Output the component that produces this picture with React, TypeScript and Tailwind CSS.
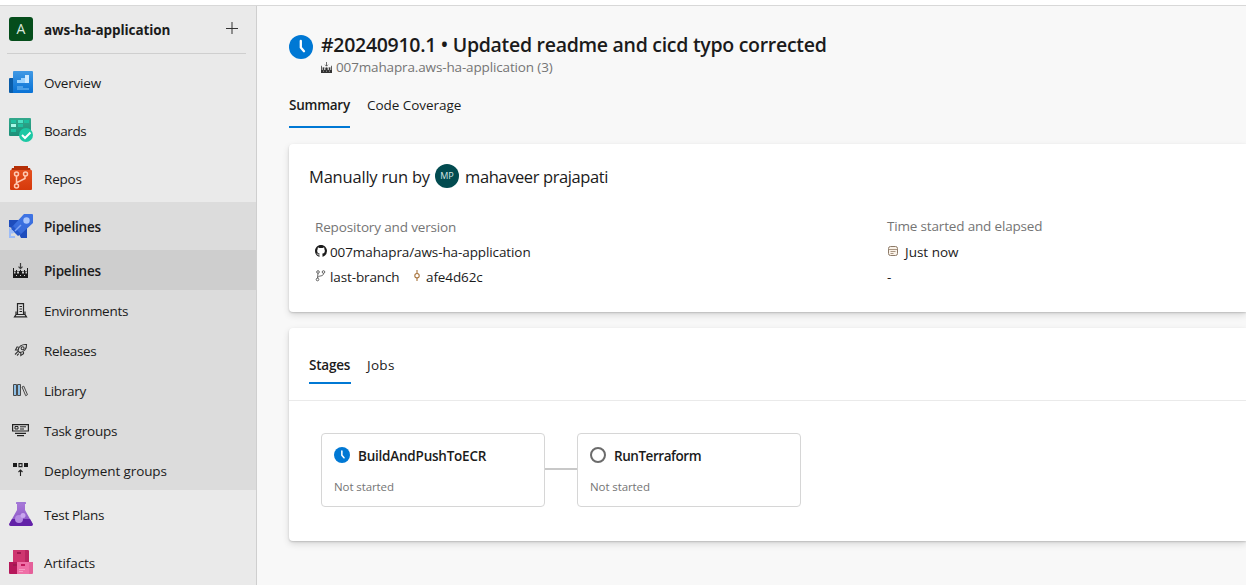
import type { ReactNode } from "react";

const svg = "block shrink-0";

function OverviewIcon() {
  return (
    <svg className={svg} width="24" height="24" viewBox="0 0 24 24">
      <defs>
        <linearGradient id="ov" x1="0" y1="0" x2="0" y2="1">
          <stop offset="0" stopColor="#4199e4" />
          <stop offset="1" stopColor="#0872d6" />
        </linearGradient>
      </defs>
      <path d="M1 8h4v15H1a1 1 0 0 1-1-1V9a1 1 0 0 1 1-1z" fill="#0a5ca8" />
      <path d="M5 1h18a1 1 0 0 1 1 1v20a1 1 0 0 1-1 1H3.500c.5 0 .5-.5.500-1V2a1 1 0 0 1 1-1z" fill="url(#ov)" />
      <path d="M8 10h4V8h4V5h4v8H8z" fill="#9ed4ff" />
      <path d="M16 5h4v8h-4z" fill="#cfeaff" />
      <path d="M8 16h6v2h6v2H8z" fill="#4a9fe8" />
    </svg>
  );
}

function BoardsIcon() {
  return (
    <svg className={svg} width="24" height="24" viewBox="0 0 24 24">
      <defs>
        <linearGradient id="bd" x1="0" y1="0" x2="0" y2="1">
          <stop offset="0" stopColor="#33a88c" />
          <stop offset="1" stopColor="#1b8f78" />
        </linearGradient>
      </defs>
      <rect width="22" height="18" rx="1" fill="url(#bd)" />
      <g fill="#1fc0a0">
        <path d="M2 2h5v3H2zM15 2h5v3h-5zM9 6h5v3H9zM2 11h5v3H2z" />
      </g>
      <path d="M9 2h5v3H9z" fill="#50e2c6" />
      <path d="M2 6h5v3H2z" fill="#a8f8e8" />
      <circle cx="17" cy="17" r="7" fill="#1cc8a4" />
      <path d="m13 17 3 3 5.500-5.500" fill="none" stroke="#fff" strokeWidth="2" />
    </svg>
  );
}

function ReposIcon() {
  return (
    <svg className={svg} width="24" height="24" viewBox="0 0 24 24">
      <defs>
        <linearGradient id="rp" x1="0" y1="0" x2="0" y2="1">
          <stop offset="0" stopColor="#e4501f" />
          <stop offset="1" stopColor="#d6390b" />
        </linearGradient>
      </defs>
      <path d="M5 0h14v2h2l1 3H2l1-3h2z" fill="#b52f07" />
      <rect x="1" y="4" width="22" height="20" rx="1" fill="url(#rp)" />
      <g fill="none" stroke="#ffc9b3" strokeWidth="1.500">
        <circle cx="7.500" cy="8" r="2" />
        <circle cx="16.500" cy="8" r="2" />
        <circle cx="7.500" cy="20" r="2" />
        <path d="M7.500 10v8M8 16.500l8-4V10" />
      </g>
    </svg>
  );
}

function RocketIcon() {
  return (
    <svg className={svg} width="24" height="24" viewBox="0 0 24 24">
      <defs>
        <linearGradient id="pl" x1="0" y1="0" x2="0" y2="1">
          <stop offset="0" stopColor="#3f74e4" />
          <stop offset="1" stopColor="#3468d8" />
        </linearGradient>
      </defs>
      <path d="M0 6h10l-4 9-6-2zM18 13v11h-6l-3-6z" fill="#1d4cbc" />
      <path d="M15 0h8a1 1 0 0 1 1 1v8L11 21l-8-8z" fill="url(#pl)" />
      <path d="m4 12-2 3 7 7 3-2z" fill="#2356cb" />
      <circle cx="17.500" cy="6.500" r="3.200" fill="#a9c5fb" />
      <path d="m5.500 16.500 6-6 1 1-6 6z" fill="#7ea4f5" />
      <path d="M0 13.500 5.500 18 4 19.500H2V22h4v2H0z" fill="#9dbcf7" />
    </svg>
  );
}

function BuildIcon({ size = 15, color = "#1b1b1b" }: { size?: number; color?: string }) {
  return (
    <svg className={svg} width={size} height={size} viewBox="0 0 15 15">
      <path d="M7.500 0v5.500M5.500 3.700l2 2 2-2" fill="none" stroke={color} strokeOpacity=".8" strokeWidth="1.200" />
      <path
        fillRule="evenodd"
        d="M0 5h1v3h2V7h1v1h3V7h1v1h3V7h1v1h2V5h1v10H0zM1 8.500v2h1.500v-2zM4 8.500v2h2v-2zM9 8.500v2h2v-2zM12.500 8.500v2H14v-2zM3 12v1h1v-1zm4 0v1h1v-1zm4 0v1h1v-1z"
        fill={color}
      />
    </svg>
  );
}

function EnvironmentsIcon() {
  return (
    <svg className={svg} width="15" height="15" viewBox="0 0 15 15" fill="none" stroke="#262626">
      <path d="M4.500 11.500V.7h6v10.800M6.500 3.500h2.500M6.500 6h2.500M6.500 8.500h2.500M3 8.500v3L1.500 13.800h12l-1.500-2.300v-3M3 11.500h9" strokeWidth="1.200" />
    </svg>
  );
}

function ReleasesIcon() {
  return (
    <svg className={svg} width="15" height="15" viewBox="0 0 15 15" fill="none" stroke="#333" strokeWidth="1.100">
      <path d="M5 8c0-4.500 4-7 8.500-6.500.4 4-2.500 8-7 8zM5.500 4H4L2.500 7h2.500M10.500 9v1.700L7.800 12.500v-3M2 11.500l2.800-2.800M4 12.500l1.800-1.800" />
      <circle cx="9.600" cy="5.300" r="1.500" />
    </svg>
  );
}

function LibraryIcon() {
  return (
    <svg className={svg} width="15" height="15" viewBox="0 0 15 15" fill="none" stroke="#4a4a4a">
      <path d="M.5 1.500h3v11h-3zM4.500 1.500h3v11h-3z" fill="#8dbfe6" />
      <path d="m9 4 1.800-.8 3.700 8.500-1.800 1z" fill="#dadada" />
    </svg>
  );
}

function TaskGroupsIcon() {
  return (
    <svg className={svg} width="17" height="15" viewBox="0 0 17 15" fill="none" stroke="#222" strokeWidth="1.200">
      <path d="M.6 1.600h15.800v6.400H.6zM3 10.300h11M5 12.600h7" />
      <path d="M3 3.500h3v2.500H3zM8 3.800h6M8 6h4" strokeWidth="1" />
    </svg>
  );
}

function DeploymentIcon() {
  return (
    <svg className={svg} width="15" height="15" viewBox="0 0 15 15">
      <path d="M0 0h4v4H0zM11 0h4v4h-4z" fill="#1b1b1b" />
      <path d="M6 .6h3v3H6zM7.500 13V7M5.500 9l2-2 2 2" fill="none" stroke="#222" strokeWidth="1.100" />
    </svg>
  );
}

function TestPlansIcon() {
  return (
    <svg className={svg} width="24" height="24" viewBox="0 0 24 24">
      <defs>
        <linearGradient id="tp" x1="0" y1="0" x2="0" y2="1">
          <stop offset="0" stopColor="#a877d8" />
          <stop offset="1" stopColor="#8350c2" />
        </linearGradient>
      </defs>
      <path d="M8 2h8v6l7.500 13.500C24.300 23 23.500 24 22 24H2c-1.500 0-2.300-1-1.500-2.500L8 8z" fill="url(#tp)" />
      <path d="M3 17h18l2.500 4.500c.8 1.500 0 2.500-1.500 2.500H2c-1.500 0-2.300-1-1.500-2.500z" fill="#6322a8" />
      <rect x="7" y="0" width="10" height="2" rx=".5" fill="#a177d6" />
      <circle cx="10" cy="17" r="4" fill="#b48ae2" />
      <circle cx="14" cy="13.500" r="2.500" fill="#c9a6ee" />
    </svg>
  );
}

function ArtifactsIcon() {
  return (
    <svg className={svg} width="24" height="24" viewBox="0 0 24 24">
      <path d="M4 0h12v12H4z" fill="#cf356f" />
      <path d="M16 0h3a1 1 0 0 1 1 1v11h-4z" fill="#bb2561" />
      <path d="M0 12h8v12H1a1 1 0 0 1-1-1z" fill="#b5175a" />
      <path d="M8 12h12v12H8z" fill="#ef6fa6" />
      <path d="M20 12h4v11a1 1 0 0 1-1 1h-3z" fill="#e5609a" />
      <path d="M8 2h4v2H8zM4 14h4v2H4z" fill="#a01850" />
      <path d="M12 14h4v2h-4z" fill="#c2185b" />
      <path d="M10 19.500h6M10 21.500h4" stroke="#f79ac2" />
    </svg>
  );
}

function ClockIcon({ size }: { size: number }) {
  return (
    <svg className={svg} width={size} height={size} viewBox="0 0 24 24">
      <circle cx="12" cy="12" r="12" fill="#0078d4" />
      <path d="M11.800 6v6.500l3.200 3.700" fill="none" stroke="#fff" strokeWidth="2.300" strokeLinecap="round" strokeLinejoin="round" />
    </svg>
  );
}

function GithubIcon() {
  return (
    <svg className="mb-[3px] block shrink-0" width="12" height="12" viewBox="0 0 16 16" fill="#1b1b1b">
      <path d="M8 0C3.580 0 0 3.580 0 8c0 3.540 2.290 6.530 5.470 7.590.4.070.55-.17.55-.38 0-.19-.01-.82-.01-1.490-2.010.37-2.530-.49-2.690-.94-.09-.23-.48-.94-.82-1.130-.28-.15-.68-.52-.01-.53.63-.01 1.080.58 1.230.82.72 1.210 1.870.87 2.330.66.070-.52.28-.87.51-1.070-1.780-.2-3.640-.89-3.640-3.950 0-.87.31-1.590.82-2.150-.08-.2-.36-1.020.08-2.120 0 0 .67-.21 2.200.82.64-.18 1.320-.27 2-.27s1.360.09 2 .27c1.530-1.040 2.200-.82 2.200-.82.44 1.100.16 1.920.08 2.120.51.56.82 1.270.82 2.150 0 3.070-1.870 3.750-3.650 3.950.29.25.54.73.54 1.480 0 1.070-.01 1.930-.01 2.200 0 .21.15.46.55.38A8.010 8.010 0 0 0 16 8c0-4.420-3.580-8-8-8z" />
    </svg>
  );
}

function BranchIcon() {
  return (
    <svg className="mb-[3px] block shrink-0" width="11" height="12" viewBox="0 0 11 12" fill="none" stroke="#555" strokeWidth=".9">
      <circle cx="3" cy="2" r="1.300" />
      <circle cx="8.500" cy="2" r="1.300" />
      <circle cx="2.500" cy="9.500" r="1.300" />
      <path d="M3 3.300 2.500 8.200M8.500 3.300C8.500 7 4 5 2.800 7.500" />
    </svg>
  );
}

function CommitIcon() {
  return (
    <svg className="mb-[3px] block shrink-0" width="8" height="12" viewBox="0 0 8 12" fill="none" stroke="#a8743c" strokeWidth="1.100">
      <path d="M4 0v3.500M4 8v3" />
      <circle cx="4" cy="5.700" r="2.200" />
    </svg>
  );
}

function CalendarIcon() {
  return (
    <svg className="mb-[3px] block shrink-0" width="10" height="10" viewBox="0 0 10 10" fill="none">
      <rect x=".5" y=".5" width="9" height="9" rx="2" stroke="#8c7a68" fill="#faf2e8" />
      <path d="M.5 3.500h9M2.500 5.500h5M2.500 7.500h3" stroke="#a08c78" strokeWidth=".9" />
    </svg>
  );
}

function NavItem({ icon, label, tracking, active }: { icon: ReactNode; label: string; tracking: string; active?: boolean }) {
  return (
    <div className={`flex h-12 items-center gap-[11px] pl-[9px] ${active ? "bg-[#dcdcdc]" : ""}`}>
      {icon}
      <span className={`pt-px whitespace-nowrap ${active ? "font-semibold" : ""} ${tracking}`}>{label}</span>
    </div>
  );
}

function SubItem({ icon, label, tracking, active }: { icon: ReactNode; label: string; tracking: string; active?: boolean }) {
  return (
    <div className={`flex h-10 items-center ${active ? "bg-[#cecece]" : ""}`}>
      <div className="flex w-[41px] justify-center">{icon}</div>
      <span className={`ml-[3px] pt-px whitespace-nowrap ${active ? "font-semibold" : ""} ${tracking}`}>{label}</span>
    </div>
  );
}

function Stage({ icon, name, tracking }: { icon: ReactNode; name: string; tracking: string }) {
  return (
    <div className="flex h-[74px] w-[224px] flex-col rounded-[4px] border border-[#d6d6d6] bg-white pl-3">
      <div className="mt-[13px] flex h-4 items-center gap-2">
        {icon}
        <span className={`pt-[2px] font-semibold whitespace-nowrap ${tracking}`}>{name}</span>
      </div>
      <span className="mt-4 text-[11.500px] leading-4 tracking-[-0.1px] text-[#757575]">Not started</span>
    </div>
  );
}

export default function App() {
  return (
    <div className="h-[585px] w-[1246px] overflow-hidden bg-white pt-[5px] font-['Open_Sans','Noto_Sans',sans-serif] text-[13.500px] leading-5 text-[#1b1b1b]">
      <div className="flex h-[580px] border-t border-[#d8d8d8]">
        <nav className="w-[257px] shrink-0 border-r border-[#cfcfcf] bg-[#eaeaea]">
          <div className="mr-[10px] ml-[7px] flex h-12 items-center border-b border-[#cfcfcf] pb-px pl-[2px]">
            <div className="flex size-6 items-center justify-center rounded-[3px] bg-[#054d1b] text-[14px] text-[#dbe8de]">A</div>
            <span className="ml-[11px] pt-px font-bold tracking-[-0.09px] whitespace-nowrap">aws-ha-application</span>
            <svg className="mr-[8px] mb-[2px] ml-auto block" width="12" height="12" viewBox="0 0 12 12">
              <path d="M6 0v12M0 6.500h12" stroke="#333" fill="none" />
            </svg>
          </div>
          <div className="pt-1">
            <NavItem icon={<OverviewIcon />} label="Overview" tracking="tracking-[-0.2px]" />
            <NavItem icon={<BoardsIcon />} label="Boards" tracking="tracking-[-0.35px]" />
            <NavItem icon={<ReposIcon />} label="Repos" tracking="tracking-[-0.2px]" />
            <NavItem icon={<RocketIcon />} label="Pipelines" tracking="tracking-[-0.2px]" active />
            <div className="bg-[#dcdcdc]">
              <SubItem icon={<BuildIcon />} label="Pipelines" tracking="tracking-[-0.2px]" active />
              <SubItem icon={<EnvironmentsIcon />} label="Environments" tracking="tracking-[-0.28px]" />
              <SubItem icon={<ReleasesIcon />} label="Releases" tracking="tracking-[-0.3px]" />
              <SubItem icon={<LibraryIcon />} label="Library" tracking="tracking-[-0.3px]" />
              <SubItem icon={<TaskGroupsIcon />} label="Task groups" tracking="tracking-[-0.25px]" />
              <SubItem icon={<DeploymentIcon />} label="Deployment groups" tracking="tracking-[-0.1px]" />
            </div>
            <NavItem icon={<TestPlansIcon />} label="Test Plans" tracking="tracking-[-0.35px]" />
            <NavItem icon={<ArtifactsIcon />} label="Artifacts" tracking="tracking-[-0.1px]" />
          </div>
        </nav>

        <main className="min-w-0 flex-1 bg-[#f8f8f8] pl-8">
          <header className="flex h-[82px] gap-2 pt-[26px]">
            <div className="pt-[3px]">
              <ClockIcon size={24} />
            </div>
            <div>
              <h1 className="text-[19.500px] leading-[25px] font-semibold tracking-[-0.29px] whitespace-nowrap">
                #20240910.1 • Updated readme and cicd typo corrected
              </h1>
              <div className="flex h-5 items-center gap-1 text-[#757575]">
                <BuildIcon size={11} color="#333" />
                <span className="tracking-[-0.14px] whitespace-nowrap">007mahapra.aws-ha-application (3)</span>
              </div>
            </div>
          </header>

          <div className="flex h-[40px] gap-[17px]">
            <div className="w-[61px] border-b-2 border-[#0078d4] pt-[7px] font-semibold tracking-[-0.25px] whitespace-nowrap">Summary</div>
            <div className="pt-[7px] tracking-[-0.05px] whitespace-nowrap">Code Coverage</div>
          </div>

          <section className="mt-4 h-[168px] rounded-l-[4px] bg-white pt-5 pl-5 shadow-[0_3px_7px_rgba(0,0,0,0.13),0_1px_2px_rgba(0,0,0,0.16)]">
            <div className="flex h-6 items-center text-[16.500px]">
              <span className="w-[126px] pt-[2px] tracking-[-0.2px] whitespace-nowrap">Manually run by</span>
              <span className="flex size-6 items-center justify-center rounded-full bg-[#024b50] text-[9px] text-[#d5e4e4]">MP</span>
              <span className="ml-[6px] pt-[2px] tracking-[-0.4px] whitespace-nowrap">mahaveer prajapati</span>
            </div>
            <div className="flex pt-[27px] pl-[6px]">
              <div className="w-[572px]">
                <div className="h-[25px] pt-[2px] tracking-[-0.15px] text-[#757575]">Repository and version</div>
                <div className="flex h-[25px] items-center gap-[3px]">
                  <GithubIcon />
                  <span className="pb-px tracking-[-0.1px]">007mahapra/aws-ha-application</span>
                </div>
                <div className="flex h-[25px] items-center">
                  <BranchIcon />
                  <span className="ml-1 w-[83px] pb-px tracking-[-0.12px] whitespace-nowrap">last-branch</span>
                  <CommitIcon />
                  <span className="ml-[5px] pb-px tracking-[-0.1px]">afe4d62c</span>
                </div>
              </div>
              <div>
                <div className="h-[25px] pt-[1px] tracking-[-0.17px] text-[#757575]">Time started and elapsed</div>
                <div className="flex h-[25px] items-center gap-[7px] pl-px">
                  <CalendarIcon />
                  <span className="pb-px tracking-[0px]">Just now</span>
                </div>
                <div className="pt-[2px]">-</div>
              </div>
            </div>
          </section>

          <section className="mt-4 h-[213px] rounded-l-[4px] bg-white shadow-[0_3px_7px_rgba(0,0,0,0.13),0_1px_2px_rgba(0,0,0,0.16)]">
            <div className="flex h-[73px] gap-4 border-b border-[#eaeaea] pt-[24px] pl-5">
              <div className="h-8 w-[42px] border-b-2 border-[#0078d4] pt-[3px] font-semibold tracking-[-0.2px] whitespace-nowrap">Stages</div>
              <div className="pt-[3px] tracking-[0.3px]">Jobs</div>
            </div>
            <div className="flex items-center pt-8 pl-8">
              <Stage icon={<ClockIcon size={16} />} name="BuildAndPushToECR" tracking="tracking-[-0.22px]" />
              <div className="mb-[2px] h-[2px] w-8 bg-[#c8c8c8]" />
              <Stage
                icon={<span className="size-4 rounded-full border-2 border-[#6b6b6b]" />}
                name="RunTerraform"
                tracking="tracking-[-0.45px]"
              />
            </div>
          </section>
        </main>
      </div>
    </div>
  );
}
